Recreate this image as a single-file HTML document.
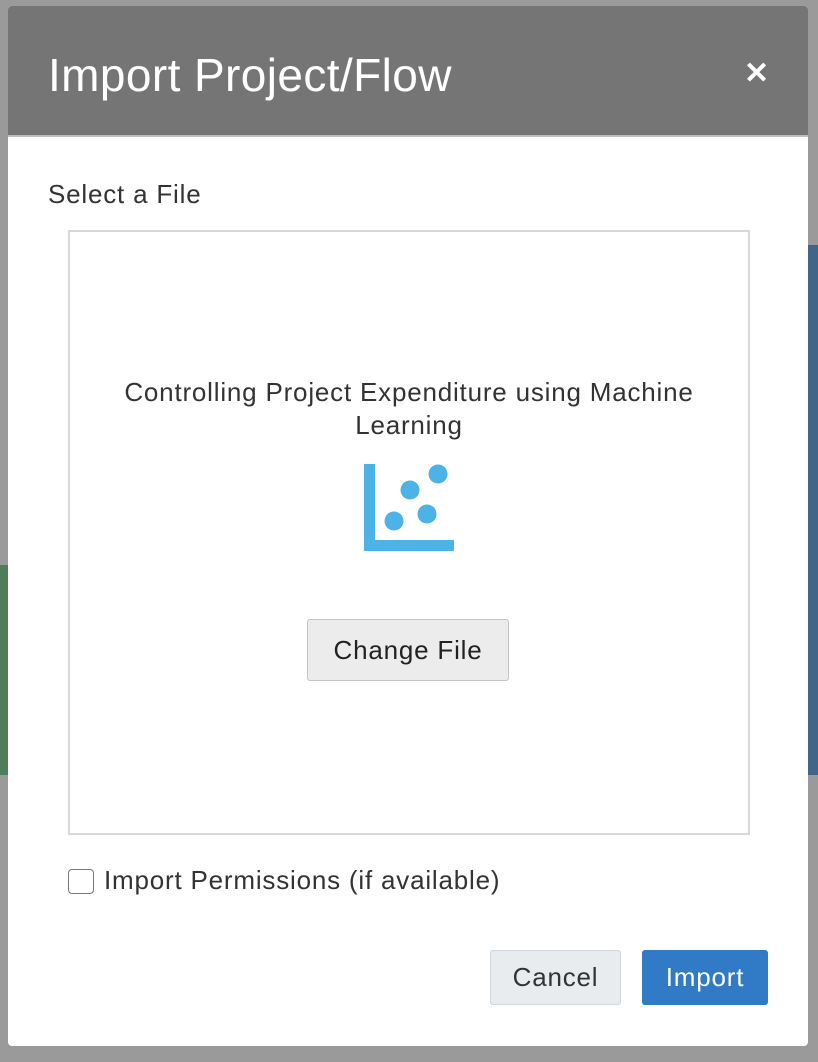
<!DOCTYPE html>
<html><head><style>
body{margin:0;width:818px;height:1062px;background:#9a9a9a;position:relative;overflow:hidden;font-family:"Liberation Sans",Arial,sans-serif}
.l1{position:absolute;left:0;top:565px;width:8px;height:210px;background:#4f7d5a}
.r1{position:absolute;left:808px;top:245px;width:10px;height:530px;background:#3f6688}
.modal{position:absolute;left:8px;top:6px;width:800px;height:1040px;background:#fff;border-radius:4px;overflow:hidden}
.hd{height:129px;background:#757575;border-bottom:2px solid #bdbdbd;position:relative}
.hd h1{margin:0;position:absolute;left:40px;top:42px;font-weight:300;font-size:46px;color:#fff;letter-spacing:0.4px}
.x{position:absolute;left:736px;top:50px;color:#fff;font-size:30px;font-weight:bold}
.t{font-size:26px;letter-spacing:0.8px}
.sel{position:absolute;left:40px;top:173px;color:#333}
.box{position:absolute;left:60px;top:224px;width:678px;height:601px;border:2px solid #d8d8d8}
.ttl{position:absolute;left:0;width:678px;top:144px;text-align:center;color:#333;line-height:33px}
.btn{position:absolute;left:237px;top:387px;width:202px;height:62px;border:1px solid #c4c4c4;background:#ececec;border-radius:3px;color:#222;text-align:center;line-height:60px;box-sizing:border-box}
.cb{position:absolute;left:60px;top:863px;width:26px;height:25px;border:1.5px solid #777;border-radius:4px;box-sizing:border-box}
.cbl{position:absolute;left:96px;top:859px;color:#333}
.cancel{position:absolute;left:482px;top:944px;width:131px;height:55px;background:#e9ecef;border:1px solid #d0d6dc;border-radius:3px;box-sizing:border-box;text-align:center;line-height:53px;color:#333}
.imp{position:absolute;left:634px;top:944px;width:126px;height:55px;background:#307ac6;border-radius:3px;text-align:center;line-height:55px;color:#fff}
</style></head><body>
<div class="l1"></div><div class="r1"></div>
<div class="modal">
<div class="hd"><h1>Import Project/Flow</h1><div class="x">✕</div></div>
<div class="sel t">Select a File</div>
<div class="box">
<div class="ttl t">Controlling Project Expenditure using Machine<br>Learning</div>
<svg style="position:absolute;left:294px;top:232px" width="92" height="92" viewBox="0 0 92 92">
<path d="M0 0h11v76h79v11H0z" fill="#4db3e6"/>
<circle cx="30" cy="57" r="9.5" fill="#4db3e6"/>
<circle cx="46" cy="26" r="9.5" fill="#4db3e6"/>
<circle cx="63" cy="50" r="9.5" fill="#4db3e6"/>
<circle cx="74" cy="10" r="9.5" fill="#4db3e6"/>
</svg>
<div class="btn t">Change File</div>
</div>
<div class="cb"></div><div class="cbl t">Import Permissions (if available)</div>
<div class="cancel t">Cancel</div><div class="imp t">Import</div>
</div>
</body></html>
